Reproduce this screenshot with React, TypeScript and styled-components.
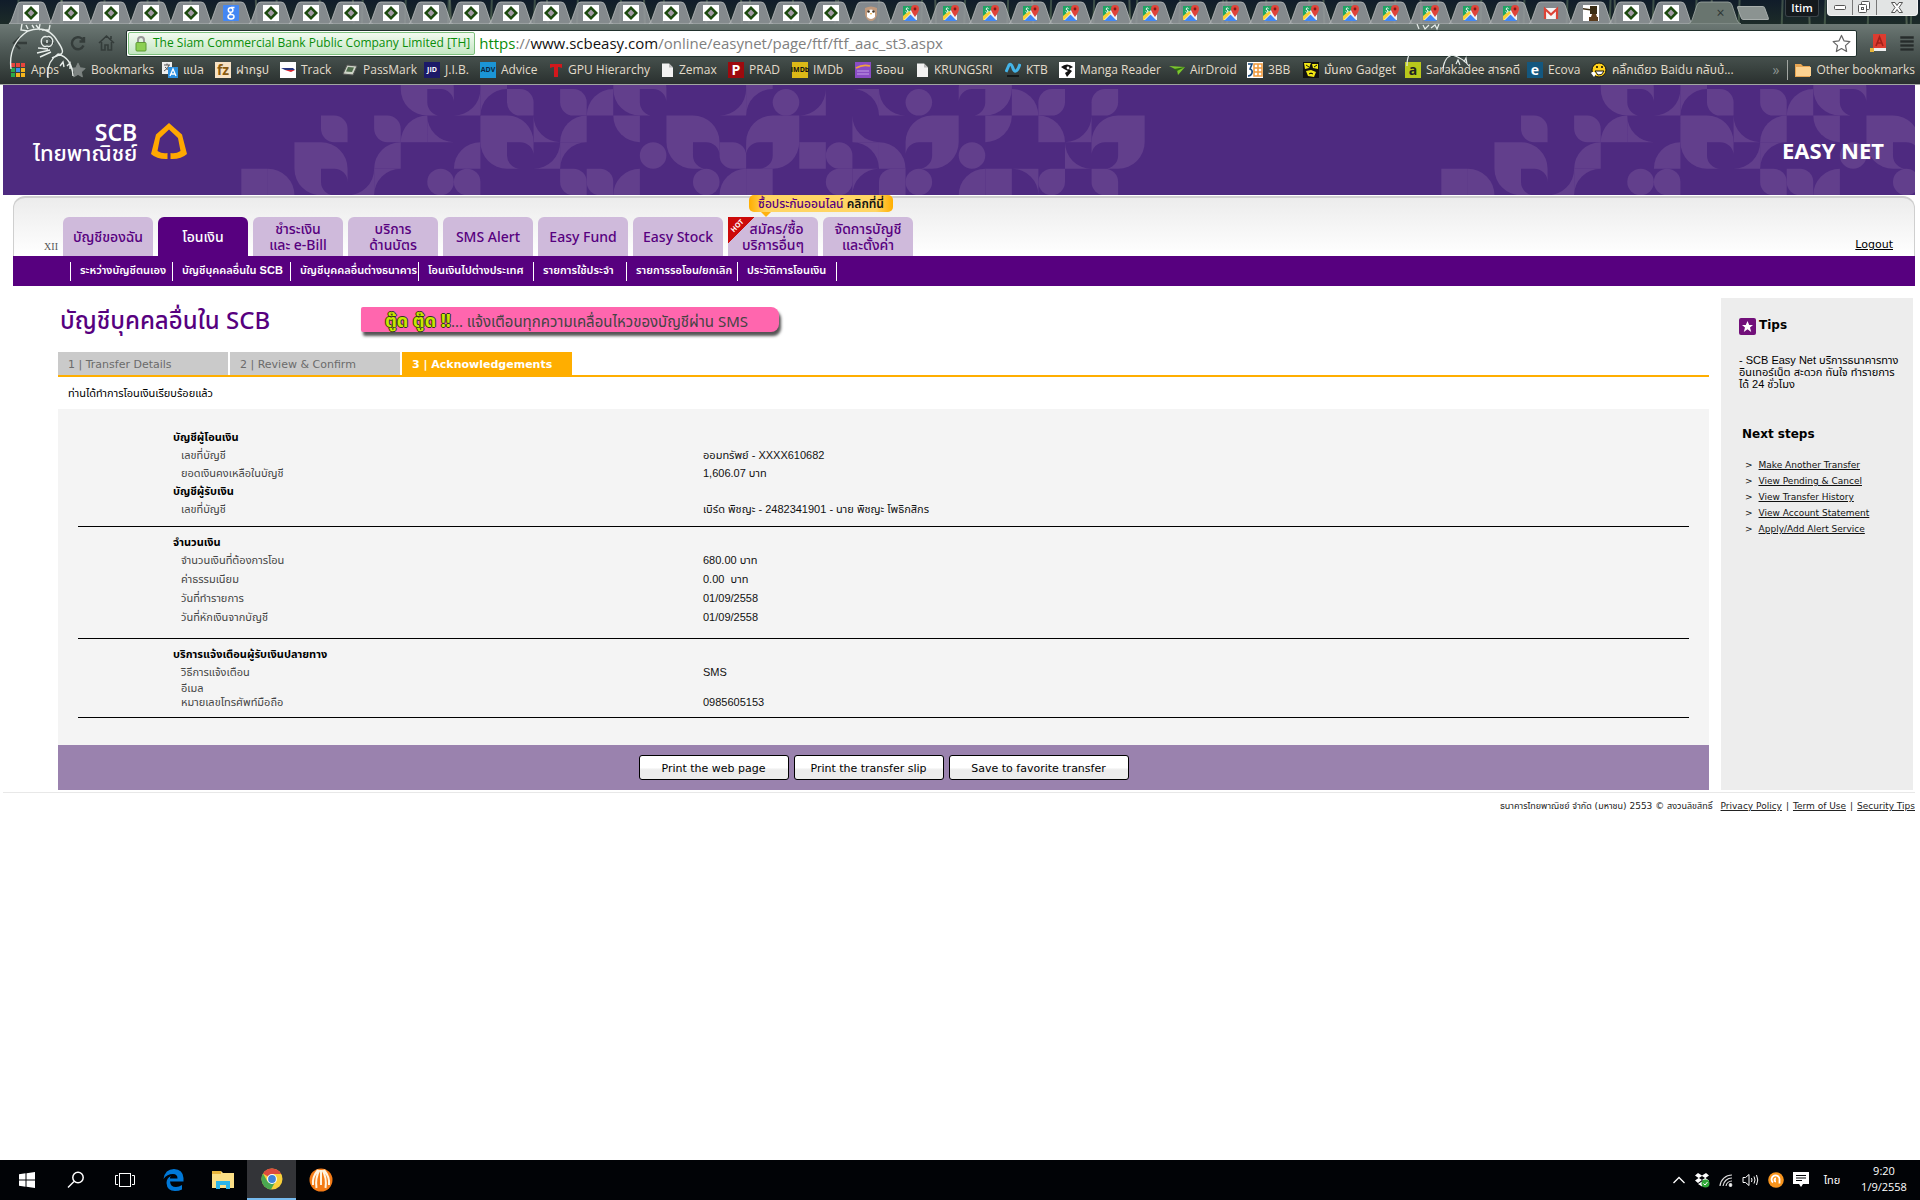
import React from "react";
import styled, { createGlobalStyle, css } from "styled-components";

const ui = `"Open Sans", "Noto Sans", "Noto Sans Thai", sans-serif`;
const verdana = `"DejaVu Sans", "Noto Sans Thai", sans-serif`;
const arial = `"Liberation Sans", "Noto Sans Thai", sans-serif`;
const display = `"Noto Sans", "Noto Sans Thai", sans-serif`;

const Global = createGlobalStyle`
  * { box-sizing: border-box; }
  body { margin: 0; background: #fff; font-family: ${arial}; font-size: 12px; color: #000; }
  button { font: inherit; color: inherit; background: none; border: 0; padding: 0; }
  a { color: inherit; }
  h1, h2, p, ul, dl, dd, dt { margin: 0; padding: 0; font-size: inherit; }
  ul { list-style: none; }
  svg { display: block; flex: none; }
`;

/* ---------- window ---------- */
const Screen = styled.div`
  min-height: 100vh;
  display: flex;
  flex-direction: column;
  overflow: hidden;
`;

const TabStrip = styled.div`
  height: 24px;
  display: flex;
  align-items: flex-end;
  padding-left: 11px;
  background:
    repeating-linear-gradient(92deg, transparent 0 17px, rgba(140, 170, 130, 0.35) 18px 19px, transparent 20px 43px),
    repeating-linear-gradient(88deg, transparent 0 61px, rgba(170, 190, 150, 0.35) 62px 63px, transparent 64px 97px),
    linear-gradient(#101c2a, #1c2b28);
`;
const TabButton = styled.button`
  position: relative;
  width: 40px;
  height: 23px;
  display: flex;
  align-items: center;
  justify-content: center;
  & > svg:first-child { position: absolute; left: -3px; top: 0; }
  & > svg:last-child { position: relative; }
`;
const ActiveTab = styled(TabButton)`
  width: 47px;
  color: #2d3634;
  font: 14px/20px ${ui};
  padding-left: 12px;
  & > svg:first-child { left: -3px; }
  & > span { position: relative; }
`;
const NewTab = styled.button`
  width: 28px;
  height: 14px;
  margin: 0 0 4px 1px;
  background: #8b9391;
  border: 1px solid #a8aeac;
  border-radius: 2px;
  transform: skewX(20deg);
`;
const Spacer = styled.div`
  flex: 1;
`;
const UserBadge = styled.button`
  align-self: flex-start;
  width: 34px;
  height: 17px;
  margin-right: 8px;
  border: 1px solid #3a4248;
  border-top: 0;
  border-radius: 0 0 3px 3px;
  background: #14191d;
  color: #fff;
  font: 600 11px/16px ${ui};
`;
const WindowButtons = styled.div`
  align-self: flex-start;
  display: flex;
  height: 16px;
  margin-right: 2px;
  border: 1px solid #f4f4f4;
  border-top: 0;
  border-radius: 0 0 4px 4px;
  background: #e2e4e4;
`;
const WindowButton = styled.button<{ $wide?: boolean }>`
  width: ${(p) => (p.$wide ? 41 : 24)}px;
  display: flex;
  align-items: center;
  justify-content: center;
  & + & { border-left: 1px solid #777; }
`;

const Chrome = styled.header`
  position: relative;
  background: linear-gradient(#6c7874 0, #515c59 22px, #39423f 45px, #2a302f 60px);
  border-bottom: 1px solid #a2a6a2;
`;
const Sketch = styled.svg`
  position: absolute;
  top: 0;
  left: 8px;
  pointer-events: none;
`;
const SketchSmall = styled(Sketch)`
  left: 1405px;
`;
const Toolbar = styled.div`
  height: 36px;
  display: flex;
  align-items: center;
  padding: 2px 5px 0 11px;
  gap: 13px;
`;
const ToolButton = styled.button`
  width: 16px;
  height: 22px;
  display: flex;
  align-items: center;
  justify-content: center;
`;
const NavButtons = styled.div`
  display: flex;
  gap: 13px;
  width: 102px;
`;
const Omnibox = styled.div`
  flex: 1;
  height: 27px;
  display: flex;
  align-items: center;
  gap: 4px;
  padding: 1px 5px 1px 1px;
  background: #fff;
  border: 1px solid #20302c;
  border-radius: 2px;
  font: 15px/22px ${ui};
  color: #808080;
`;
const Identity = styled.button`
  height: 23px;
  display: flex;
  align-items: center;
  gap: 6px;
  padding: 0 4px 0 6px;
  border: 1px solid #7dbf7d;
  border-radius: 2px;
  background: linear-gradient(#f3fbf1, #c4e6c3);
  color: #0a8d0a;
  font: 12px/20px ${ui};
  white-space: nowrap;
`;
const Url = styled.span`
  flex: 1;
  & b { font-weight: 400; color: #0a8d0a; }
  & strong { font-weight: 400; color: #111; }
`;

const Bookmarks = styled.nav`
  height: 24px;
  display: grid;
  grid-template-columns: 60px 92px 53px 65px 62px 82px 56px 69px 112px 67px 64px 63px 61px 89px 54px 110px 78px 56px 102px 122px 64px 180px 1fr auto;
  align-items: center;
  padding: 0 5px 4px 10px;
  font: 12px/16px ${ui};
  color: #e3dccb;
`;
const Bookmark = styled.a`
  display: flex;
  align-items: center;
  gap: 5px;
  white-space: nowrap;
  color: inherit;
  text-decoration: none;
`;
const More = styled.button`
  justify-self: end;
  margin-right: 8px;
  font: 14px/16px ${ui};
  color: #8c9491;
`;
const OtherBookmarks = styled(Bookmark)`
  height: 20px;
  padding-left: 7px;
  border-left: 1px solid #a2a6a2;
`;
const Tile = styled.span<{ $bg: string; $fg: string; $small?: boolean }>`
  width: 16px;
  height: 16px;
  flex: none;
  display: flex;
  align-items: center;
  justify-content: center;
  background: ${(p) => p.$bg};
  color: ${(p) => p.$fg};
  font: 700 ${(p) => (p.$small ? 7 : 14)}px/16px ${ui};
`;

/* ---------- bank page ---------- */
const Page = styled.div`
  flex: 1;
  margin: 0 5px 0 3px;
`;
const Banner = styled.div`
  position: relative;
  height: 110px;
  display: flex;
  justify-content: space-between;
  padding: 0 31px 0 30px;
  background: #4e2a80;
  color: #fff;
`;
const PatternArt = styled.svg`
  position: absolute;
  inset: 0;
`;
const Logo = styled.a`
  position: relative;
  display: flex;
  gap: 13px;
  padding-top: 37px;
  text-decoration: none;
`;
const LogoText = styled.span`
  display: flex;
  flex-direction: column;
  align-items: flex-end;
  font: 500 22px/20px ${display};
  & strong { font: 600 23px/20px ${display}; }
`;
const Product = styled.strong`
  position: relative;
  padding-top: 52px;
  font: 700 22px/26px ${display};
`;

const Menu = styled.div`
  margin: 1px 0 0 10px;
`;
const MenuTop = styled.div`
  height: 60px;
  display: flex;
  align-items: flex-end;
  border: 1px solid #cfcfcf;
  border-bottom: 0;
  border-top-width: 2px;
  border-radius: 12px 12px 0 0;
  background: linear-gradient(#ececec, #fff);
`;
const Counter = styled.span`
  width: 49px;
  padding: 0 5px 3px 0;
  text-align: right;
  font: 10px/12px "Liberation Serif", serif;
  color: #555;
`;
const TabList = styled.div`
  display: flex;
  gap: 5px;
`;
const MenuTab = styled.a<{ $on?: boolean }>`
  position: relative;
  width: 90px;
  height: 39px;
  display: flex;
  align-items: center;
  justify-content: center;
  border-radius: 6px 6px 0 0;
  background: ${(p) => (p.$on ? "#57007f" : "#cfbadb")};
  color: ${(p) => (p.$on ? "#fff" : "#57007f")};
  font: 500 14px/16px ${display};
  text-align: center;
  text-decoration: none;
  white-space: pre;
`;
const HotCorner = styled.span`
  position: absolute;
  left: 0;
  top: 0;
  width: 26px;
  height: 26px;
  overflow: hidden;
  background: linear-gradient(135deg, #cc0a0a 50%, transparent 51%);
  color: #fff;
  font: 700 7px/10px ${display};
  & > span { display: block; margin: 4px 0 0 -7px; transform: rotate(-45deg); }
`;
const PromoBubble = styled.span`
  position: absolute;
  left: 21px;
  top: -22px;
  width: 144px;
  height: 17px;
  border-radius: 5px;
  background: linear-gradient(90deg, #ffae00, #ffd564 12%, #ffd564 88%, #ffae00);
  color: #57007f;
  font: 500 12px/18px ${display};
  & b { color: #111; font-weight: 600; }
  &::after {
    content: "";
    position: absolute;
    left: 12px;
    top: 17px;
    border: 5px solid transparent;
    border-top-color: #ffb210;
    border-bottom: 0;
  }
`;
const Logout = styled.a`
  margin: 0 21px 4px auto;
  font: 11px/14px ${verdana};
`;
const SubMenu = styled.nav`
  height: 30px;
  display: grid;
  grid-template-columns: 102px 118px 128px 115px 93px 111px 99px 1fr;
  align-items: center;
  padding-left: 57px;
  background: #57007f;
  color: #fff;
`;
const SubLink = styled.a`
  height: 19px;
  padding-left: 9px;
  border-left: 1px solid #fff;
  font: 600 11px/17px ${arial};
  text-decoration: none;
  white-space: nowrap;
`;

const Columns = styled.div`
  display: flex;
  gap: 12px;
  margin: 12px 2px 0 55px;
`;
const Main = styled.main`
  flex: 1;
`;
const TitleRow = styled.div`
  height: 54px;
  display: flex;
  align-items: flex-start;
  padding-top: 9px;
`;
const Title = styled.h1`
  width: 303px;
  padding-left: 2px;
  color: #57007f;
  font: 500 24px/26px ${display};
  white-space: nowrap;
`;
const SmsPromo = styled.a`
  width: 418px;
  height: 25px;
  padding-left: 24px;
  border-radius: 2px 8px 8px 2px;
  background: #ff66ae;
  box-shadow: 2px 4px 3px #555;
  color: #444;
  font: 400 15px/26px ${display};
  text-decoration: none;
  white-space: nowrap;
  & b { font-size: 18px; color: #c7e800; font-weight: 700; text-shadow: 1px 0 #33331a, -1px 0 #33331a, 0 1px #33331a, 0 -1px #33331a; }
`;
const Steps = styled.ol`
  margin: 0;
  padding: 0;
  list-style: none;
  display: flex;
  gap: 2px;
  border-bottom: 2px solid #ffae00;
`;
const Step = styled.li<{ $on?: boolean }>`
  width: 170px;
  height: 23px;
  padding-left: 10px;
  background: ${(p) => (p.$on ? "#ffae00" : "#cacaca")};
  color: ${(p) => (p.$on ? "#fff" : "#6b6b6b")};
  font: ${(p) => (p.$on ? 700 : 400)} 11px/25px ${verdana};
`;
const Message = styled.p`
  height: 32px;
  padding-left: 10px;
  font: 11px/32px ${arial};
`;
const Panel = styled.div`
  padding: 19px 20px 27px;
  background: #f4f4f4;
`;
const Section = styled.dl<{ $row: number; $last: number }>`
  padding-bottom: ${(p) => p.$last}px;
  border-bottom: 1px solid #000;
  line-height: ${(p) => p.$row}px;
  font-size: 11px;
  font-family: ${arial};
  & + & { padding-top: 6px; }
`;
const GroupName = styled.dt`
  padding-left: 95px;
  font-weight: 700;
  line-height: 18px;
`;
const Field = styled.div<{ $tight?: boolean }>`
  display: grid;
  grid-template-columns: 522px 1fr;
  padding-left: 103px;
  ${(p) => p.$tight && css`line-height: 14px;`}
  & dt { color: #444; }
  & dd { color: #111; white-space: pre; }
`;
const Actions = styled.div`
  height: 45px;
  display: flex;
  justify-content: center;
  align-items: flex-start;
  gap: 5px;
  padding-top: 10px;
  background: #9a82ae;
`;
const ActionButton = styled.button<{ $wide?: boolean }>`
  width: ${(p) => (p.$wide ? 180 : 150)}px;
  height: 25px;
  border: 1px solid #000;
  border-radius: 3px;
  background: linear-gradient(#fff 50%, #ececec 60%);
  font: 11px/25px ${verdana};
`;

const Aside = styled.aside`
  width: 192px;
  padding: 20px 18px;
  background: #ededed;
`;
const TipsTitle = styled.h2`
  display: flex;
  gap: 3px;
  font: 700 12px/14px ${verdana};
`;
const TipsText = styled.p`
  margin: 19px -8px 0 0;
  font: 11px/12px ${arial};
  white-space: pre;
`;
const NextTitle = styled.h2`
  margin: 34px 0 13px 3px;
  font: 700 12px/20px ${verdana};
`;
const NextItem = styled.li`
  display: flex;
  gap: 6px;
  padding-left: 6px;
  font: 9px/16px ${verdana};
  color: #111;
  white-space: nowrap;
`;
const Footer = styled.footer`
  display: flex;
  justify-content: flex-end;
  gap: 4px;
  margin-top: 2px;
  padding-top: 6px;
  border-top: 1px solid #e8e8e8;
  font: 9px/14px ${verdana};
  color: #222;
  & > span:first-child { margin-right: 4px; }
`;

/* ---------- taskbar ---------- */
const Taskbar = styled.footer`
  height: 40px;
  display: flex;
  align-items: center;
  padding: 0 7px 0 2px;
  background: #010306;
  color: #fff;
`;
const TaskButton = styled.button<{ $on?: boolean }>`
  width: 49px;
  height: 40px;
  display: flex;
  align-items: center;
  justify-content: center;
  ${(p) => p.$on && css`background: #333438; border-bottom: 2px solid #76b9ed;`}
`;
const Tray = styled.div`
  margin-left: auto;
  display: flex;
  align-items: center;
  gap: 9px;
  font: 11px/16px ${ui};
`;
const Language = styled.button`
  width: 28px;
  font: 11px/16px ${ui};
`;
const Clock = styled.div`
  width: 58px;
  padding-bottom: 2px;
  text-align: center;
`;

/* ---------- banner pattern, one unit per tile ---------- */
type Cell = [number, number];
const circles: Cell[] = [[7, 3], [15, 2], [17, 3], [25, 3], [20, 0], [25, 0], [27, 2]];
const squares: Cell[] = [[9, -1], [19, -1], [19, 3], [21, 2], [28, 3]];
// quarter discs, grouped by the tile corner that holds their centre
const discs: Record<string, Cell[]> = {
  br: [[6, 1], [5, 2], [8, 2], [12, 1], [13, 0], [14, 3], [18, 3], [27, 3]],
  bl: [[24, 2], [29, 0], [30, 1], [1, 3]],
  tr: [[14, 1]],
  tl: [[28, 1]],
};
// concave corners, grouped by the tile corner that is filled
const spandrels: Record<string, Cell[]> = {
  bl: [[7, 1], [11, 1], [24, 0], [23, 1], [31, 2]],
  br: [[4, 3], [8, 0], [11, 2], [18, 0], [21, 0], [31, 1]],
  tl: [[5, 3], [9, 0], [12, 2], [19, 0], [23, 3]],
  tr: [[23, 0], [23, 2], [29, 3]],
};
const leaves: Cell[] = [[3, 1], [5, 1], [10, 0], [12, 0], [12, 3], [13, 3], [18, 2], [32, 3]];
const leavesFlipped: Cell[] = [[30, 0], [32, 0]];
const petals: Cell[] = [[2, 2], [9, 1], [16, 1], [6, -1], [14, -1]];
const petalsFlipped: Cell[] = [[19, 1], [25, 1], [32, 1], [27, -1]];
const turn: Record<string, number> = { br: 0, bl: 90, tl: 180, tr: 270 };
const at = ([x, y]: Cell) => `translate(${x} ${y})`;
const leafPath = "M0 0H.5A.5 .5 0 0 1 1 .5V1H.5A.5 .5 0 0 1 0 .5Z";
const petalPath =
  "M0 0H1A1 1 0 0 1 2 1V1.5A.5 .5 0 0 0 1.5 1H1V1.5A.5 .5 0 0 0 1.5 2H1A1 1 0 0 1 0 1Z";

function Motif() {
  return (
    <>
      {circles.map((c) => <circle key={`c${c}`} cx={c[0] + 0.5} cy={c[1] + 0.5} r={0.5} />)}
      {squares.map((c) => <rect key={`s${c}`} x={c[0]} y={c[1]} width={1} height={1} />)}
      <rect x={0} y={3} width={1} height={1} />
      {Object.entries(discs).map(([k, cells]) =>
        cells.map((c) => <path key={k + c} d="M1 1V0A1 1 0 0 0 0 1Z" transform={`${at(c)} rotate(${turn[k]} .5 .5)`} />)
      )}
      {Object.entries(spandrels).map(([k, cells]) =>
        cells.map((c) => <path key={k + c} d="M1 1V0A1 1 0 0 1 0 1Z" transform={`${at(c)} rotate(${turn[k]} .5 .5)`} />)
      )}
      {leaves.map((c) => <path key={`l${c}`} d={leafPath} transform={at(c)} />)}
      {leavesFlipped.map((c) => <path key={`m${c}`} d={leafPath} transform={`${at(c)} translate(1 0) scale(-1 1)`} />)}
      {petals.map((c) => <path key={`p${c}`} d={petalPath} transform={at(c)} />)}
      {petalsFlipped.map((c) => <path key={`q${c}`} d={petalPath} transform={`${at(c)} translate(2 0) scale(-1 1)`} />)}
      <path d="M8 3.5A.5 .5 0 0 1 8.5 3A.5 .5 0 0 1 9 3.5V4H8.5A.5 .5 0 0 1 8 3.5Z" />
      <path d="M22 2.5A.5 .5 0 0 1 23 2.5V3H22.5A.5 .5 0 0 1 22 2.5Z" />
      <path d="M22 3.5A.5 .5 0 0 1 22.5 3H23V3.5A.5 .5 0 0 1 22 3.5Z" />
      <path d="M24 4V3.5A.5 .5 0 0 1 24.5 3H25V4Z" />
      <path d="M30 3.5A.5 .5 0 0 1 30.5 3H31V3.5A.5 .5 0 0 1 30 3.5Z" />
    </>
  );
}

/* ---------- icons ---------- */
const TabShape = ({ active }: { active?: boolean }) => (
  <svg width={active ? 53 : 46} height="23" viewBox={active ? "0 0 53 23" : "0 0 46 23"}>
    <path
      d={active ? "M0 23Q3 22 4 19L9 4Q10 1 13 1H40Q43 1 44 4L49 19Q50 22 53 23Z" : "M1 23Q3 21 4 18L9 4Q10 1 13 1H33Q36 1 37 4L42 19Q43 22 45 23Z"}
      fill={active ? "#69756f" : "rgba(150,155,158,.86)"}
      stroke={active ? "#a0a8a4" : "#b9bcbd"}
      strokeWidth=".8"
    />
  </svg>
);
const Diamond = () => (
  <svg width="16" height="16"><rect width="16" height="16" fill="#fff" /><path d="M8 1L15 8L8 15L1 8Z" fill="#1c4a0e" /><path d="M8 4.6L11.4 8L8 11.4L4.6 8Z" fill="#a39aa5" /></svg>
);
const GoogleG = () => (
  <svg width="16" height="16"><rect width="16" height="16" rx="1" fill="#4387f4" /><g fill="none" stroke="#fff" strokeWidth="1.5"><circle cx="7.6" cy="5" r="2.3" /><ellipse cx="8" cy="11.8" rx="3" ry="2.2" /><path d="M8 7.3Q6 8.6 8.6 9.6M8 2.6H11.5" /></g></svg>
);
const MapPin = () => (
  <svg width="16" height="16">
    <path d="M0 1H10V5L0 13Z" fill="#1fa463" />
    <path d="M0 12L8 5L14 10V15H0Z" fill="#f4f4f4" />
    <path d="M0 15V11L6 6L8 8L1 15Z" fill="#f8d035" />
    <path d="M1 16L7.500 9.500L14 16Z" fill="#4387f4" />
    <path d="M5.500 3.500Q4.500 2.500 3.500 3.200Q2.500 4.500 4 5Q5.800 5.500 4.800 7Q3 7.800 2.600 6.600" fill="none" stroke="#fff" />
    <path d="M12 0A4 4 0 0 0 8 4Q8 6.500 12 12Q16 6.500 16 4A4 4 0 0 0 12 0Z" fill="#e0433a" /><circle cx="12" cy="4" r="1.4" fill="#7b1a14" />
  </svg>
);
const Owl = () => (
  <svg width="16" height="16"><path d="M2 3Q8 0 14 3V10Q12 16 8 16Q4 16 2 10Z" fill="#c19a7c" /><path d="M4 6Q8 3 12 6V12Q8 16 4 12Z" fill="#fff" /><circle cx="5.5" cy="6.5" r="1.3" fill="#432" /><circle cx="10.5" cy="6.5" r="1.3" fill="#432" /><path d="M7 8H9L8 10Z" fill="#e0a030" /></svg>
);
const Gmail = () => (
  <svg width="16" height="16"><rect x="1" y="3" width="14" height="11" fill="#f5f5f5" /><path d="M2 14V4L8 9.5L14 4V14" fill="none" stroke="#dc4437" strokeWidth="2.2" /></svg>
);
const Hammer = () => (
  <svg width="16" height="16"><rect width="16" height="16" fill="#fff" /><path d="M0 3L7 4V1H14V9H7V5.5L0 4.5Z" fill="#3a2c14" /><path d="M6 16V12H8L9 9H13L14 12H15V16Z" fill="#5b3b1c" /></svg>
);
const Document = () => (
  <svg width="13" height="16"><path d="M1 1.5H8L12 5.5V15H1Z" fill="#f2f2f2" /><path d="M8 1.5V5.5H12Z" fill="#b9b9b9" /></svg>
);
const AppsGrid = () => (
  <svg width="16" height="16">
    {["#e8453c", "#e8453c", "#e8453c", "#2ba84a", "#3b8fe8", "#f5b51d", "#2ba84a", "#f5b51d", "#f5b51d"].map((f, i) => (
      <rect key={i} x={1 + (i % 3) * 5} y={1 + Math.floor(i / 3) * 5} width="4" height="4" fill={f} />
    ))}
  </svg>
);
const Star = ({ fill, stroke, size }: { fill: string; stroke: string; size: number }) => (
  <svg width={size} height={size} viewBox="0 0 20 20"><path d="M10 1.5L12.6 7.2L18.8 8L14.2 12.2L15.4 18.4L10 15.3L4.6 18.4L5.8 12.2L1.2 8L7.4 7.2Z" fill={fill} stroke={stroke} strokeWidth="1.3" strokeLinejoin="round" /></svg>
);
const Translate = () => (
  <svg width="16" height="16"><rect width="10" height="12" fill="#eee" /><path d="M2 3H8M5 1.5V3M7 3Q6 7 2 9M3 5L7 8.5" stroke="#555" fill="none" /><rect x="6" y="5" width="10" height="11" fill="#2b8fe0" /><path d="M8 14L11 7L14 14M9 12H13" stroke="#fff" strokeWidth="1.3" fill="none" /></svg>
);
const Track = () => (
  <svg width="16" height="16"><rect width="16" height="16" fill="#fff" /><path d="M1 6H13L15 8H5Z" fill="#27357e" /><path d="M5 8H15L11 10Z" fill="#d8242f" /></svg>
);
const PassMark = () => (
  <svg width="16" height="16"><path d="M5 3L15 4L11 13L1 12Z" fill="#ccd3c6" stroke="#555" /><path d="M6 5L12 5.6L10 10L4 9.4Z" fill="#4e6b4c" /></svg>
);
const Tee = () => <svg width="14" height="16"><path d="M1 2H13V6L10 5H9V15H5V5H4L1 6Z" fill="#d3181c" /></svg>;
const Aeon = () => (
  <svg width="16" height="16"><rect width="16" height="16" fill="#8a4cc4" /><path d="M1 6Q8 2 15 4" stroke="#f0a23c" strokeWidth="1.6" fill="none" /><path d="M2 9H14M2 12H14" stroke="#c3a0e6" /></svg>
);
const Ktb = () => <svg width="16" height="16"><path d="M1 10L4 3Q6 1 7.500 5Q9 10 11 9Q13 8 15 2" stroke="#44b4e8" strokeWidth="3" fill="none" /><path d="M2 14H14" stroke="#15191a" strokeWidth="2" /></svg>;
const Manga = () => <svg width="16" height="16"><rect width="16" height="16" fill="#fff" /><path d="M2 5Q8 0 14 5L10 7L13 9L8 15L6 11L9 9L5 7Z" fill="#111" /><circle cx="9" cy="6" r="1.4" fill="#fff" /></svg>;
const AirDroid = () => <svg width="16" height="16"><path d="M0 4L16 5L9 13L8 8Z" fill="#7bc72c" /><path d="M5 7L16 5L8 9Z" fill="#2f6a12" /></svg>;
const ThreeBB = () => (
  <svg width="16" height="16"><rect width="16" height="16" fill="#fff" /><path d="M1 2H5L3 7Q6 8 5 11T1 14" stroke="#17497e" strokeWidth="1.6" fill="none" /><path d="M7 2H15V14H7ZM11 2V14M7 6H15M7 10H15" stroke="#f0993b" strokeWidth="1.5" fill="none" /></svg>
);
const Face = () => <svg width="16" height="16"><rect width="16" height="16" fill="#111" /><path d="M1 1H8L6 6L2 7ZM9 2H15V7L10 6ZM3 9L8 8L13 10L11 15L5 14Z" fill="#f0e614" /><path d="M3 3L6 5M11 5L14 3M6 12Q8 10 10 12" stroke="#111" /></svg>;
const Smiley = () => <svg width="16" height="16"><circle cx="8" cy="8" r="7" fill="#ffd21c" stroke="#111" /><circle cx="6" cy="5" r="1" /><circle cx="11" cy="5" r="1" /><path d="M4 9H13Q11 14 7 13Z" fill="#fff" stroke="#111" /><path d="M0 11Q3 8 5 12L3 15Z" fill="#fff" /></svg>;
const Folder = () => <svg width="16" height="16"><path d="M0 2H6L8 4H15V15H0Z" fill="#e8a552" /><path d="M1 5H16V14H1Z" fill="#fcd291" /></svg>;
const Lock = () => <svg width="12" height="17"><path d="M3 8V5A3 3 0 0 1 9 5V8" fill="none" stroke="#999" strokeWidth="2" /><rect x="1" y="7.5" width="10" height="8.5" rx="1" fill="#8ccf52" stroke="#5d9a35" /></svg>;
const ToolIcon = ({ d, w = 2.4 }: { d: string; w?: number }) => (
  <svg width="17" height="18" viewBox="0 0 17 18" fill="none" stroke="#343c3a" strokeWidth={w}><path d={d} /></svg>
);

const icons: [string, React.ReactNode][] = [
  ["Apps", <AppsGrid />],
  ["Bookmarks", <Star fill="#7d8482" stroke="#7d8482" size={16} />],
  ["แปล", <Translate />],
  ["ฝากรูป", <Tile $bg="#f7e2c5" $fg="#8a5a10">fz</Tile>],
  ["Track", <Track />],
  ["PassMark", <PassMark />],
  ["J.I.B.", <Tile $bg="#1c1a68" $fg="#fff" $small>JID</Tile>],
  ["Advice", <Tile $bg="#1b95d6" $fg="#0b2640" $small>ADV</Tile>],
  ["GPU Hierarchy", <Tee />],
  ["Zemax", <Document />],
  ["PRAD", <Tile $bg="#9d0a0e" $fg="#fff">P</Tile>],
  ["IMDb", <Tile $bg="#dcb917" $fg="#111" $small>IMDb</Tile>],
  ["อิออน", <Aeon />],
  ["KRUNGSRI", <Document />],
  ["KTB", <Ktb />],
  ["Manga Reader", <Manga />],
  ["AirDroid", <AirDroid />],
  ["3BB", <ThreeBB />],
  ["มั่นคง Gadget", <Face />],
  ["Sarakadee สารคดี", <Tile $bg="#b9c81b" $fg="#222">a</Tile>],
  ["Ecova", <Tile $bg="#13577f" $fg="#fff">e</Tile>],
  ["คลิ๊กเดียว Baidu กลับบ้...", <Smiley />],
];

const tabIcon = (i: number) => {
  if (i === 5) return <GoogleG />;
  if (i === 21) return <Owl />;
  if (i > 21 && i < 38) return <MapPin />;
  if (i === 38) return <Gmail />;
  if (i === 39) return <Hammer />;
  return <Diamond />;
};

const menuTabs = ["บัญชีของฉัน", "โอนเงิน", "ชำระเงิน\nและ e-Bill", "บริการ\nด้านบัตร", "SMS Alert", "Easy Fund", "Easy Stock", "  สมัคร/ซื้อ\nบริการอื่นๆ", "จัดการบัญชี\nและตั้งค่า"];
const subLinks = ["ระหว่างบัญชีตนเอง", "บัญชีบุคคลอื่นใน SCB", "บัญชีบุคคลอื่นต่างธนาคาร", "โอนเงินไปต่างประเทศ", "รายการใช้ประจำ", "รายการรอโอน/ยกเลิก", "ประวัติการโอนเงิน"];
const nextSteps = ["Make Another Transfer", "View Pending & Cancel", "View Transfer History", "View Account Statement", "Apply/Add Alert Service"];

export default function App() {
  return (
    <Screen>
      <Global />
      <TabStrip>
        {Array.from({ length: 42 }, (_, i) => (
          <TabButton key={i} aria-label={`Tab ${i + 1}`}><TabShape />{tabIcon(i)}</TabButton>
        ))}
        <ActiveTab><TabShape active /><span>×</span></ActiveTab>
        <NewTab aria-label="New tab" />
        <Spacer />
        <UserBadge>Itim</UserBadge>
        <WindowButtons>
          <WindowButton aria-label="Minimize"><svg width="12" height="6"><rect x=".5" y=".5" width="11" height="4" rx="1" fill="#fff" stroke="#555" /></svg></WindowButton>
          <WindowButton aria-label="Restore"><svg width="13" height="13" fill="#fff" stroke="#555"><rect x="3.5" y=".5" width="8" height="8" rx="1" /><rect x=".5" y="3.5" width="8" height="8" rx="1" /><rect x="3.5" y="6.5" width="2" height="2" /></svg></WindowButton>
          <WindowButton $wide aria-label="Close"><svg width="12" height="11" fill="#fff" stroke="#555"><path d="M.5 .5H4L6 3.5L8 .5H11.5L8 5.5L11.5 10.5H8L6 7.5L4 10.5H.5L4 5.5Z" /></svg></WindowButton>
        </WindowButtons>
      </TabStrip>

      <Chrome>
        <Toolbar>
          <NavButtons>
            <ToolButton aria-label="Back"><ToolIcon d="M16 9H3M9 3L3 9L9 15" /></ToolButton>
            <ToolButton aria-label="Forward"><ToolIcon d="M1 9H14M8 3L14 9L8 15" w={1} /></ToolButton>
            <ToolButton aria-label="Reload"><ToolIcon d="M15 3V7.5H10.5M14.5 7A6 6 0 1 0 14.5 11.5" /></ToolButton>
            <ToolButton aria-label="Home"><ToolIcon d="M1 9L8.5 2L16 9M3.5 8V16H7V11H10V16H13.5V8M13 5V2" w={1.6} /></ToolButton>
          </NavButtons>
          <Omnibox>
            <Identity><Lock />The Siam Commercial Bank Public Company Limited [TH]</Identity>
            <Url><b>https</b>://<strong>www.scbeasy.com</strong>/online/easynet/page/ftf/ftf_aac_st3.aspx</Url>
            <Star fill="#fff" stroke="#666" size={19} />
          </Omnibox>
          <ToolButton aria-label="Dictionary"><svg width="17" height="20"><rect x="3" y="1" width="13" height="17" fill="#dd3c30" /><path d="M3 15H16V18H3Z" fill="#eee" /><path d="M6 13L9.5 4L13 13M7.5 10H11.5" stroke="#a2201a" strokeWidth="1.6" fill="none" /><rect y="15" width="4" height="4" fill="#e8b53a" /></svg></ToolButton>
          <ToolButton aria-label="Menu"><svg width="14" height="15" fill="#262c2b"><path d="M0 0H14V3H0ZM0 4H14V7H0ZM0 8H14V11H0ZM0 12H14V15H0Z" stroke="#59625f" strokeWidth=".6" /></svg></ToolButton>
        </Toolbar>
        <Bookmarks>
          {icons.map(([label, icon]) => <Bookmark key={label} href="#">{icon}{label}</Bookmark>)}
          <More>»</More>
          <OtherBookmarks href="#"><Folder />Other bookmarks</OtherBookmarks>
        </Bookmarks>
        <Sketch width="70" height="60" fill="none" stroke="#e6ece9" strokeWidth="1.4">
          <path d="M3 45Q0 20 20 7L13 6L14 0M18 1L20 5M24 1L26 4M28 1L31 5L32 0M42 1L41 6L34 6M20 7Q40 0 50 18Q57 28 53 30L44 34M39 13A4 5 0 1 0 39 22A4 5 0 1 0 39 13M39 16V19M30 24L40 25M29 29L42 26M32 33L43 28M40 54Q38 38 50 30Q64 34 65 52M52 42L55 38L56 43M59 42L62 39L62 45" />
        </Sketch>
        <SketchSmall width="70" height="52" fill="none" stroke="#e6ece9" strokeWidth="1.2">
          <path d="M12 0L14 5M18 1L20 5L24 1M26 4L30 1L32 5L34 0M2 42Q2 35 4 31M38 48Q38 34 47 31Q58 34 64 42M51 40L53 36L55 41M59 38L61 34L62 40" />
        </SketchSmall>
      </Chrome>

      <Page>
        <Banner>
          <PatternArt width="100%" height="110" fill="#623f8c">
            <g transform="translate(238.3 4) scale(26.57)"><Motif /></g>
            <g transform="translate(1438.3 4) scale(26.57)"><Motif /></g>
          </PatternArt>
          <Logo href="#">
            <LogoText><strong>SCB</strong><span>ไทยพาณิชย์</span></LogoText>
            <svg width="38" height="38" viewBox="0 0 38 38"><path d="M19 1L32 12.500L37 32Q31 37.500 20.500 37V31Q26 32 30.500 29L28 16L19 7.500L10 16L7.500 29Q12 32 17.500 31V37Q7 37.500 1 32L6 12.500Z" fill="#ffa800" /></svg>
          </Logo>
          <Product>EASY NET</Product>
        </Banner>

        <Menu>
          <MenuTop>
            <Counter>XII</Counter>
            <TabList>
              {menuTabs.map((t, i) => (
                <MenuTab key={t} href="#" $on={i === 1}>
                  {i === 7 && <HotCorner><span>HOT</span></HotCorner>}
                  {t}
                  {i === 7 && <PromoBubble>ซื้อประกันออนไลน์ <b>คลิกที่นี่</b></PromoBubble>}
                </MenuTab>
              ))}
            </TabList>
            <Logout href="#">Logout</Logout>
          </MenuTop>
          <SubMenu>
            {subLinks.map((t) => <SubLink key={t} href="#">{t}</SubLink>)}
            <SubLink as="span" />
          </SubMenu>
        </Menu>

        <Columns>
          <Main>
            <TitleRow>
              <Title>บัญชีบุคคลอื่นใน SCB</Title>
              <SmsPromo href="#"><b>ตู๊ด ตู๊ด !!</b>... แจ้งเตือนทุกความเคลื่อนไหวของบัญชีผ่าน SMS</SmsPromo>
            </TitleRow>
            <Steps>
              <Step>1 | Transfer Details</Step>
              <Step>2 | Review &amp; Confirm</Step>
              <Step $on>3 | Acknowledgements</Step>
            </Steps>
            <Message>ท่านได้ทำการโอนเงินเรียบร้อยแล้ว</Message>
            <Panel>
              <Section $row={18} $last={8}>
                <GroupName>บัญชีผู้โอนเงิน</GroupName>
                <Field><dt>เลขที่บัญชี</dt><dd>ออมทรัพย์ - XXXX610682</dd></Field>
                <Field><dt>ยอดเงินคงเหลือในบัญชี</dt><dd>1,606.07 บาท</dd></Field>
                <GroupName>บัญชีผู้รับเงิน</GroupName>
                <Field><dt>เลขที่บัญชี</dt><dd>เบิร์ด พิชญะ - 2482341901 - นาย พิชญะ โพธิกสิกร</dd></Field>
              </Section>
              <Section $row={19} $last={11}>
                <GroupName>จำนวนเงิน</GroupName>
                <Field><dt>จำนวนเงินที่ต้องการโอน</dt><dd>680.00 บาท</dd></Field>
                <Field><dt>ค่าธรรมเนียม</dt><dd>0.00  บาท</dd></Field>
                <Field><dt>วันที่ทำรายการ</dt><dd>01/09/2558</dd></Field>
                <Field><dt>วันที่หักเงินจากบัญชี</dt><dd>01/09/2558</dd></Field>
              </Section>
              <Section $row={18} $last={8}>
                <GroupName>บริการแจ้งเตือนผู้รับเงินปลายทาง</GroupName>
                <Field><dt>วิธีการแจ้งเตือน</dt><dd>SMS</dd></Field>
                <Field $tight><dt>อีเมล</dt><dd /></Field>
                <Field $tight><dt>หมายเลขโทรศัพท์มือถือ</dt><dd>0985605153</dd></Field>
              </Section>
            </Panel>
            <Actions>
              <ActionButton>Print the web page</ActionButton>
              <ActionButton>Print the transfer slip</ActionButton>
              <ActionButton $wide>Save to favorite transfer</ActionButton>
            </Actions>
          </Main>
          <Aside>
            <TipsTitle>
              <svg width="17" height="17" viewBox="0 0 17 17"><rect width="17" height="17" rx="2" fill="#72107a" /><path d="M8.500 3L10.200 7H14L11 9.500L12.200 14L8.500 11.300L4.800 14L6 9.500L3 7H6.800Z" fill="#fff" /></svg>
              Tips
            </TipsTitle>
            <TipsText>{"- SCB Easy Net บริการธนาคารทาง\nอินเทอร์เน็ต สะดวก ทันใจ ทำรายการ\nได้ 24 ชั่วโมง"}</TipsText>
            <NextTitle>Next steps</NextTitle>
            <ul>
              {nextSteps.map((s) => <NextItem key={s}><span>&gt;</span><a href="#">{s}</a></NextItem>)}
            </ul>
          </Aside>
        </Columns>
        <Footer>
          <span>ธนาคารไทยพาณิชย์ จำกัด (มหาชน) 2553 © สงวนลิขสิทธิ์</span>
          <a href="#">Privacy Policy</a>|<a href="#">Term of Use</a>|<a href="#">Security Tips</a>
        </Footer>
      </Page>

      <Taskbar>
        <TaskButton aria-label="Start"><svg width="16" height="16" fill="#fff"><path d="M0 2.300L6.500 1.300V7.500H0ZM7.500 1.200L16 0V7.500H7.500ZM0 8.500H6.500V14.700L0 13.700ZM7.500 8.500H16V16L7.500 14.800Z" /></svg></TaskButton>
        <TaskButton aria-label="Search"><svg width="18" height="18" fill="none" stroke="#fff" strokeWidth="1.500"><circle cx="11" cy="6.500" r="5.200" /><path d="M7 10.500L1 16.500" /></svg></TaskButton>
        <TaskButton aria-label="Task view"><svg width="20" height="14" fill="none" stroke="#fff"><rect x="4.500" y=".5" width="11" height="13" /><path d="M3 2.500H.5V11.500H3M17 2.500H19.500V11.500H17" /></svg></TaskButton>
        <TaskButton aria-label="Edge"><svg width="21" height="22" viewBox="0 0 21 22"><path d="M0.500 10Q2 0 11 0Q20 0.500 20.500 9V12.500H7Q7.500 18 13 18Q16 18 19 16V20.500Q16 22 12 22Q4 22 3.500 14Q3.500 9 8 7Q6.500 8.500 7 9.500H14.500Q14.500 5 10 5Q4 5 0.500 10Z" fill="#0078d7" /></svg></TaskButton>
        <TaskButton aria-label="File Explorer"><svg width="22" height="18"><path d="M0 0H9L11 2H22V17H0Z" fill="#fbdf86" /><path d="M0 0H9V3H0Z" fill="#e9b63c" /><path d="M4 18V10H18V18H14V14H8V18Z" fill="#2cb5e8" /></svg></TaskButton>
        <TaskButton $on aria-label="Chrome"><svg width="22" height="22" viewBox="0 0 22 22"><circle cx="11" cy="11" r="10.500" fill="#f8cf3a" /><path d="M11 11L2 5.500A10.500 10.500 0 0 1 20.200 6H11Z" fill="#dd4b3e" /><path d="M2 5.500A10.500 10.500 0 0 0 10 21.500L14.500 13.500L6.500 13.500Z" fill="#4aa850" /><circle cx="11" cy="11" r="4.900" fill="#fff" /><circle cx="11" cy="11" r="3.900" fill="#3f83d8" /></svg></TaskButton>
        <TaskButton aria-label="BitComet"><svg width="24" height="24" viewBox="0 0 24 24"><circle cx="12" cy="12" r="11.500" fill="#f47b16" /><path d="M4 17Q3 9 9 2M7.500 20Q6 10 10.500 2M12 17V2M16.500 20Q18 10 13.500 2M20 17Q21 9 15 2" stroke="#fff3df" strokeWidth="2" fill="none" /></svg></TaskButton>
        <Tray>
          <svg width="12" height="8" fill="none" stroke="#fff" strokeWidth="1.300"><path d="M.5 7L6 1.500L11.500 7" /></svg>
          <svg width="16" height="16"><path d="M4 1L8 3.500L12 1L15 3.500L11.500 6L15 8.500L12 11L8 8L4 11L1 8.500L4.500 6L1 3.500Z" fill="#fff" /><path d="M8 4L11 6L8 8L5 6Z" fill="#010306" /><path d="M4 12L8 9.500L11 12L8 14.500Z" fill="#fff" /><circle cx="11.500" cy="11.500" r="4" fill="#2fa838" /><path d="M9.500 11.500L11 13L13.500 10" stroke="#fff" fill="none" /></svg>
          <svg width="14" height="14" fill="none" stroke="#ddd" strokeWidth="1.200"><path d="M1 13A12 12 0 0 1 13 2M4 13A9 9 0 0 1 13 5M7 13A6 6 0 0 1 13 8" /><circle cx="11.500" cy="12" r="1.300" fill="#fff" /></svg>
          <svg width="17" height="14" fill="none" stroke="#fff"><path d="M1 4.500H3.500L7 1.500V12.500L3.500 9.500H1ZM9.500 5Q10.500 7 9.500 9M12 3.500Q14 7 12 10.500M14.500 2Q17 7 14.500 12" /></svg>
          <svg width="16" height="16"><circle cx="8" cy="8" r="7.800" fill="#f7941d" /><path d="M5 10.500A4 4 0 1 1 11.500 8V11.500M8 6.500A1.500 1.500 0 1 0 8 9.500" fill="none" stroke="#fff" strokeWidth="1.800" /></svg>
          <svg width="16" height="16"><path d="M0 0H16V12H10L8 15L6 12H0Z" fill="#fff" /><path d="M3 3.500H13M3 6H13M3 8.500H9" stroke="#010306" /></svg>
          <Language>ไทย</Language>
          <Clock>9:20<br />1/9/2558</Clock>
        </Tray>
      </Taskbar>
    </Screen>
  );
}
